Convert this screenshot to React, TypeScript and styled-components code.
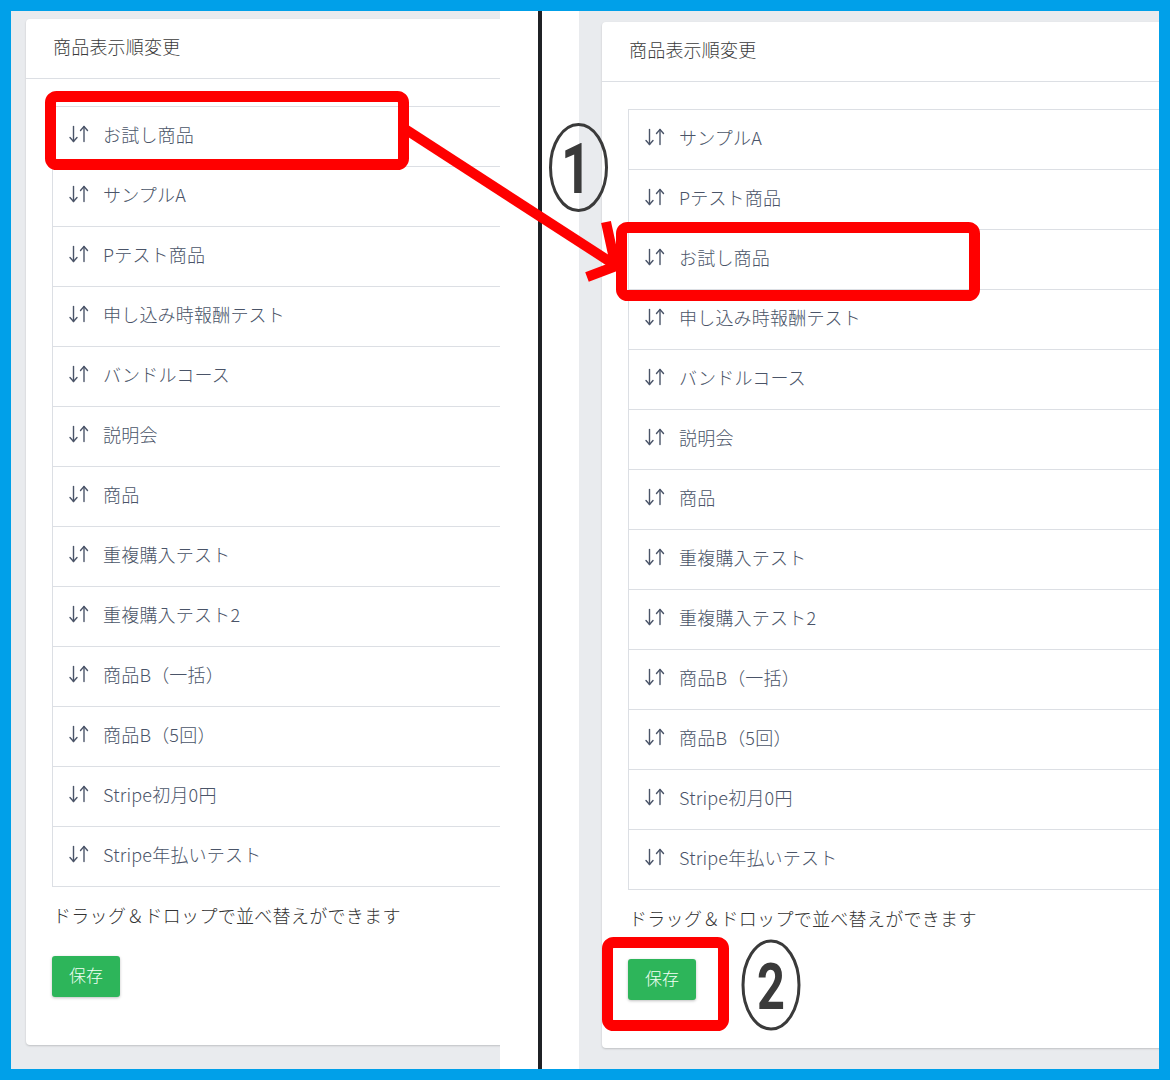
import React from "react";
import styled, { createGlobalStyle } from "styled-components";

const GlobalStyle = createGlobalStyle`
  html, body { margin: 0; padding: 0; background: #ffffff; }
  body { font-family: "Noto Sans CJK JP", "Noto Sans", sans-serif; }
  * { box-sizing: border-box; }
`;

const Frame = styled.div`
  position: relative;
  width: 1170px;
  height: 1080px;
  padding: 11px;
  background: #00a0e9;
  overflow: hidden;
`;

const Screen = styled.div`
  display: flex;
  height: 100%;
  background: #ffffff;
`;

const Pane = styled.div<{ $width?: number; $padTop: number; $padLeft: number }>`
  flex: ${(p) => (p.$width ? `0 0 ${p.$width}px` : "1 1 auto")};
  display: flex;
  align-items: flex-start;
  padding: ${(p) => p.$padTop}px 0 0 ${(p) => p.$padLeft}px;
  background: #e9ebee;
  overflow: hidden;
`;

const Gutter = styled.div`
  flex: 0 0 79px;
  display: flex;
  padding-left: 38px;
  background: #ffffff;
`;

const Divider = styled.div`
  width: 4px;
  height: 100%;
  background: #1f2125;
`;

const Card = styled.section`
  flex: 0 0 760px;
  background: #ffffff;
  border-radius: 4px;
  box-shadow: 0 1px 2px rgba(0, 0, 0, 0.18);
  padding-bottom: 48px;
`;

const CardHeader = styled.h2`
  margin: 0;
  height: 60px;
  display: flex;
  align-items: center;
  padding: 0 0 5px 27px;
  border-bottom: 1px solid #dcdfe4;
  font-size: 18px;
  font-weight: 300;
  color: #3b3b3b;
  letter-spacing: 0.2px;
`;

const SortList = styled.ul`
  list-style: none;
  margin: 27px 0 0 26px;
  padding: 0;
  border-top: 1px solid #dcdfe4;
  border-left: 1px solid #dcdfe4;
`;

const SortRow = styled.li`
  height: 60px;
  display: flex;
  align-items: center;
  gap: 14px;
  padding: 0 0 6px 16px;
  border-bottom: 1px solid #dcdfe4;
  font-size: 18px;
  font-weight: 300;
  color: #4a5468;
  letter-spacing: 0.2px;
`;

const Help = styled.p`
  margin: 16px 0 0 27px;
  line-height: 24px;
  font-size: 18px;
  font-weight: 300;
  color: #333333;
  letter-spacing: 0.3px;
`;

const SaveButton = styled.button`
  display: block;
  margin: 29px 0 0 26px;
  height: 41px;
  padding: 0 0 4px 0;
  width: 68px;
  border: none;
  border-radius: 3px;
  background: #2db55a;
  color: #f2fff5;
  font-family: inherit;
  font-size: 17px;
  font-weight: 300;
  box-shadow: 0 1px 3px rgba(0, 0, 0, 0.25);
`;

const Overlay = styled.svg`
  position: absolute;
  left: 0;
  top: 0;
  pointer-events: none;
`;

const SortIcon = () => (
  <svg width="20" height="20" viewBox="0 0 20 20" fill="none" stroke="#4a5468" strokeWidth="1.4" strokeLinecap="round" strokeLinejoin="round">
    <path d="M4.5 2.5v15" />
    <path d="M1 13.5l3.5 4 3.5-4" />
    <path d="M15 17.5v-15" />
    <path d="M11.5 6.5l3.5-4 3.5 4" />
  </svg>
);

const base = [
  "申し込み時報酬テスト",
  "バンドルコース",
  "説明会",
  "商品",
  "重複購入テスト",
  "重複購入テスト2",
  "商品B（一括）",
  "商品B（5回）",
  "Stripe初月0円",
  "Stripe年払いテスト",
];

const before = ["お試し商品", "サンプルA", "Pテスト商品", ...base];
const after = ["サンプルA", "Pテスト商品", "お試し商品", ...base];

const SortPanel = ({ items }: { items: string[] }) => (
  <Card>
    <CardHeader>商品表示順変更</CardHeader>
    <SortList>
      {items.map((name) => (
        <SortRow key={name}>
          <SortIcon />
          <span>{name}</span>
        </SortRow>
      ))}
    </SortList>
    <Help>ドラッグ＆ドロップで並べ替えができます</Help>
    <SaveButton>保存</SaveButton>
  </Card>
);

const red = "#ff0000";
const ink = "#3a3a3a";

export default function App() {
  return (
    <>
      <GlobalStyle />
      <Frame>
        <Screen>
          <Pane $width={489} $padTop={8} $padLeft={15}>
            <SortPanel items={before} />
          </Pane>
          <Gutter>
            <Divider />
          </Gutter>
          <Pane $padTop={11} $padLeft={23}>
            <SortPanel items={after} />
          </Pane>
        </Screen>
        <Overlay width="1170" height="1080" viewBox="0 0 1170 1080">
          <rect x="50.5" y="96.5" width="353" height="68" rx="6" fill="none" stroke={red} strokeWidth="11" />
          <rect x="621.5" y="227.5" width="353" height="68" rx="6" fill="none" stroke={red} strokeWidth="11" />
          <rect x="607.5" y="942.5" width="116" height="83" rx="6" fill="none" stroke={red} strokeWidth="11" />
          <line x1="405" y1="129" x2="612" y2="263" stroke={red} strokeWidth="10" />
          <path d="M606 222 L616 268 M587 277 L616 266" fill="none" stroke={red} strokeWidth="10" />
          <ellipse cx="578.5" cy="167.5" rx="28" ry="43" fill="none" stroke={ink} strokeWidth="3" />
          <ellipse cx="771" cy="985" rx="28" ry="44" fill="none" stroke={ink} strokeWidth="3" />
          <text transform="translate(576 193) scale(0.75 1)" textAnchor="middle" fontFamily="Roboto, sans-serif" fontWeight="700" fontSize="70" fill={ink}>1</text>
          <text transform="translate(771 1009) scale(0.75 1)" textAnchor="middle" fontFamily="Roboto, sans-serif" fontWeight="700" fontSize="65" fill={ink}>2</text>
        </Overlay>
      </Frame>
    </>
  );
}
